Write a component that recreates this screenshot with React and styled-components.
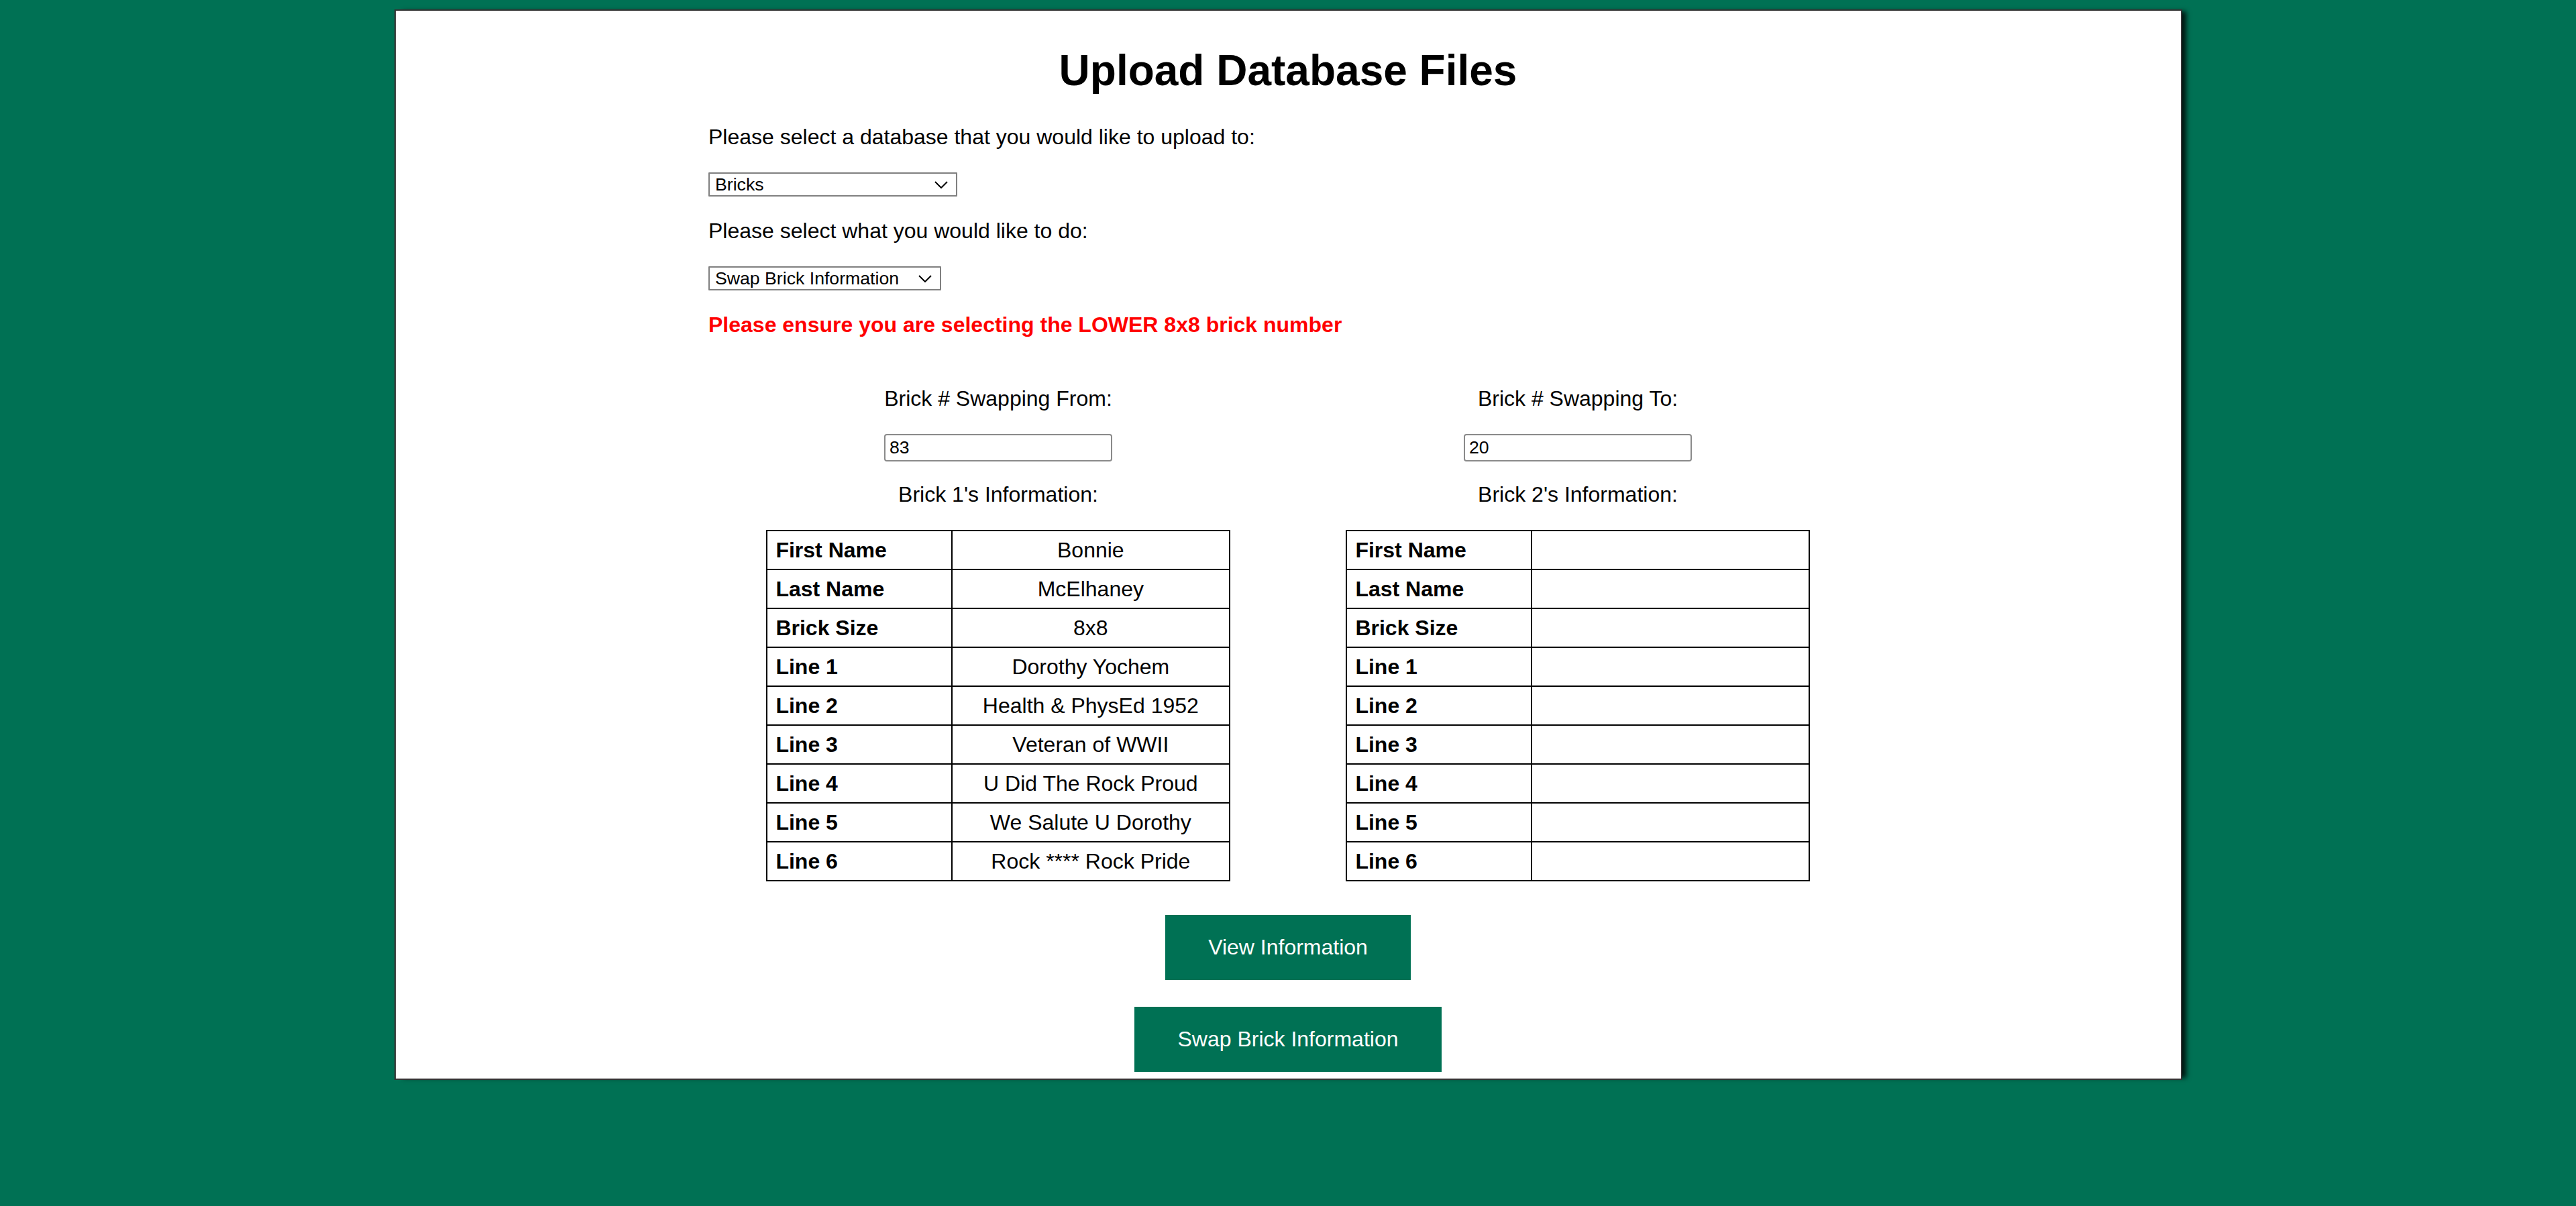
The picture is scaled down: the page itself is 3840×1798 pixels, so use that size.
import React from 'react'
import styled, { createGlobalStyle } from 'styled-components'

const GREEN = '#007154'

const GlobalStyle = createGlobalStyle`
    html, body {
        margin: 0;
        padding: 0;
    }
    body {
        background: ${GREEN};
        min-height: 100vh;
        font-family: "Liberation Sans", Arial, sans-serif;
    }
`

const fields = ['First Name', 'Last Name', 'Brick Size', 'Line 1', 'Line 2', 'Line 3', 'Line 4', 'Line 5', 'Line 6']

const brickOne = ['Bonnie', 'McElhaney', '8x8', 'Dorothy Yochem', 'Health & PhysEd 1952', 'Veteran of WWII', 'U Did The Rock Proud', 'We Salute U Dorothy', 'Rock **** Rock Pride']
const brickTwo = ['', '', '', '', '', '', '', '', '']

function Chevron() {
    return (
        <ChevronIcon width="20" height="11" viewBox="0 0 20 11">
            <path d="M1 1 L10 10 L19 1" fill="none" stroke="#000" strokeWidth="2" />
        </ChevronIcon>
    )
}

function Dropdown(props) {
    return (
        <SelectWrap>
            <Select width={props.width} defaultValue={props.value}>
                {props.options.map(o => <option key={o}>{o}</option>)}
            </Select>
            <Chevron />
        </SelectWrap>
    )
}

function BrickColumn(props) {
    return (
        <Column>
            <ColumnLabel>{props.label}</ColumnLabel>
            <NumberInput type="text" defaultValue={props.number} />
            <InfoLabel>{props.infoLabel}</InfoLabel>
            <InfoTable>
                <tbody>
                    {fields.map((f, i) => (
                        <tr key={f}>
                            <FieldCell>{f}</FieldCell>
                            <ValueCell>{props.values[i]}</ValueCell>
                        </tr>
                    ))}
                </tbody>
            </InfoTable>
        </Column>
    )
}

function App() {
    return (
        <>
            <GlobalStyle />
            <Panel>
                <Title>Upload Database Files</Title>
                <Form>
                    <Prompt>Please select a database that you would like to upload to:</Prompt>
                    <Dropdown width={371} value="Bricks" options={['Bricks', 'Donor Recognition Wall']} />
                    <Prompt top={32.5}>Please select what you would like to do:</Prompt>
                    <Dropdown width={347} value="Swap Brick Information" options={['Upload New Data', 'Swap Brick Information']} />
                    <Warning>Please ensure you are selecting the LOWER 8x8 brick number</Warning>
                    <Columns>
                        <BrickColumn label="Brick # Swapping From:" number="83" infoLabel="Brick 1's Information:" values={brickOne} />
                        <BrickColumn label="Brick # Swapping To:" number="20" infoLabel="Brick 2's Information:" values={brickTwo} />
                    </Columns>
                </Form>
                <Actions>
                    <ActionButton>View Information</ActionButton>
                    <ActionButton>Swap Brick Information</ActionButton>
                </Actions>
            </Panel>
        </>
    )
}

export default App

const Panel = styled.main`
    box-sizing: border-box;
    width: 2665px;
    margin: 14px auto 0;
    padding: 0 0 10px;
    background: #fff;
    border: 2px solid #333;
    box-shadow: 9px 0 7px -3px rgba(0, 0, 0, 0.8);
    color: #000;
    font-family: "Liberation Sans", Arial, sans-serif;
`

const Title = styled.h1`
    margin: 53px 0 43px;
    font-size: 64px;
    line-height: 73.6px;
    font-weight: bold;
    text-align: center;
`

const Form = styled.div`
    width: 1728px;
    margin: 0 auto;
    display: flex;
    flex-direction: column;
    align-items: flex-start;
`

const Prompt = styled.p`
    margin: ${props => props.top || 0}px 0 0;
    font-size: 32px;
    line-height: 36.8px;
`

const SelectWrap = styled.div`
    position: relative;
    margin-top: 34.7px;
    display: inline-flex;
`

const Select = styled.select`
    appearance: none;
    -webkit-appearance: none;
    box-sizing: border-box;
    width: ${props => props.width}px;
    height: 36px;
    margin: 0;
    padding: 0 40px 0 8px;
    background: #fff;
    border: 2px solid #808080;
    border-radius: 1px;
    color: #000;
    font-family: "Liberation Sans", Arial, sans-serif;
    font-size: 26.67px;
    line-height: 32px;
`

const ChevronIcon = styled.svg`
    position: absolute;
    right: 14px;
    top: 13px;
    pointer-events: none;
`

const Warning = styled.p`
    margin: 32.5px 0 0;
    font-size: 32px;
    line-height: 36.8px;
    font-weight: bold;
    color: #ff0000;
`

const Columns = styled.div`
    width: 100%;
    margin-top: 74px;
    display: grid;
    grid-template-columns: 1fr 1fr;
`

const Column = styled.div`
    display: flex;
    flex-direction: column;
    align-items: center;
`

const ColumnLabel = styled.div`
    font-size: 32px;
    line-height: 36.8px;
`

const NumberInput = styled.input`
    box-sizing: border-box;
    width: 340px;
    height: 41px;
    margin: 34px 0 0;
    padding: 0 6px;
    border: 2px solid #8a8a8a;
    border-radius: 4px;
    color: #000;
    font-family: "Liberation Sans", Arial, sans-serif;
    font-size: 26.67px;
    outline: none;
`

const InfoLabel = styled.div`
    margin-top: 30.5px;
    font-size: 32px;
    line-height: 36.8px;
`

const InfoTable = styled.table`
    width: 80%;
    margin-top: 34.7px;
    border-collapse: collapse;
    font-size: 32px;
    line-height: 36px;

    td {
        border: 2px solid #000;
        padding: 10px 12px;
        height: 36px;
    }
`

const FieldCell = styled.td`
    width: 40%;
    font-weight: bold;
    text-align: left;
`

const ValueCell = styled.td`
    text-align: center;
`

const Actions = styled.div`
    margin-top: 50px;
    display: flex;
    flex-direction: column;
    align-items: center;
    gap: 40px;
`

const ActionButton = styled.button`
    margin: 0;
    padding: 30px 64px;
    background: ${GREEN};
    border: none;
    color: #fff;
    font-family: "Liberation Sans", Arial, sans-serif;
    font-size: 32px;
    line-height: 36.8px;
    cursor: pointer;
`
